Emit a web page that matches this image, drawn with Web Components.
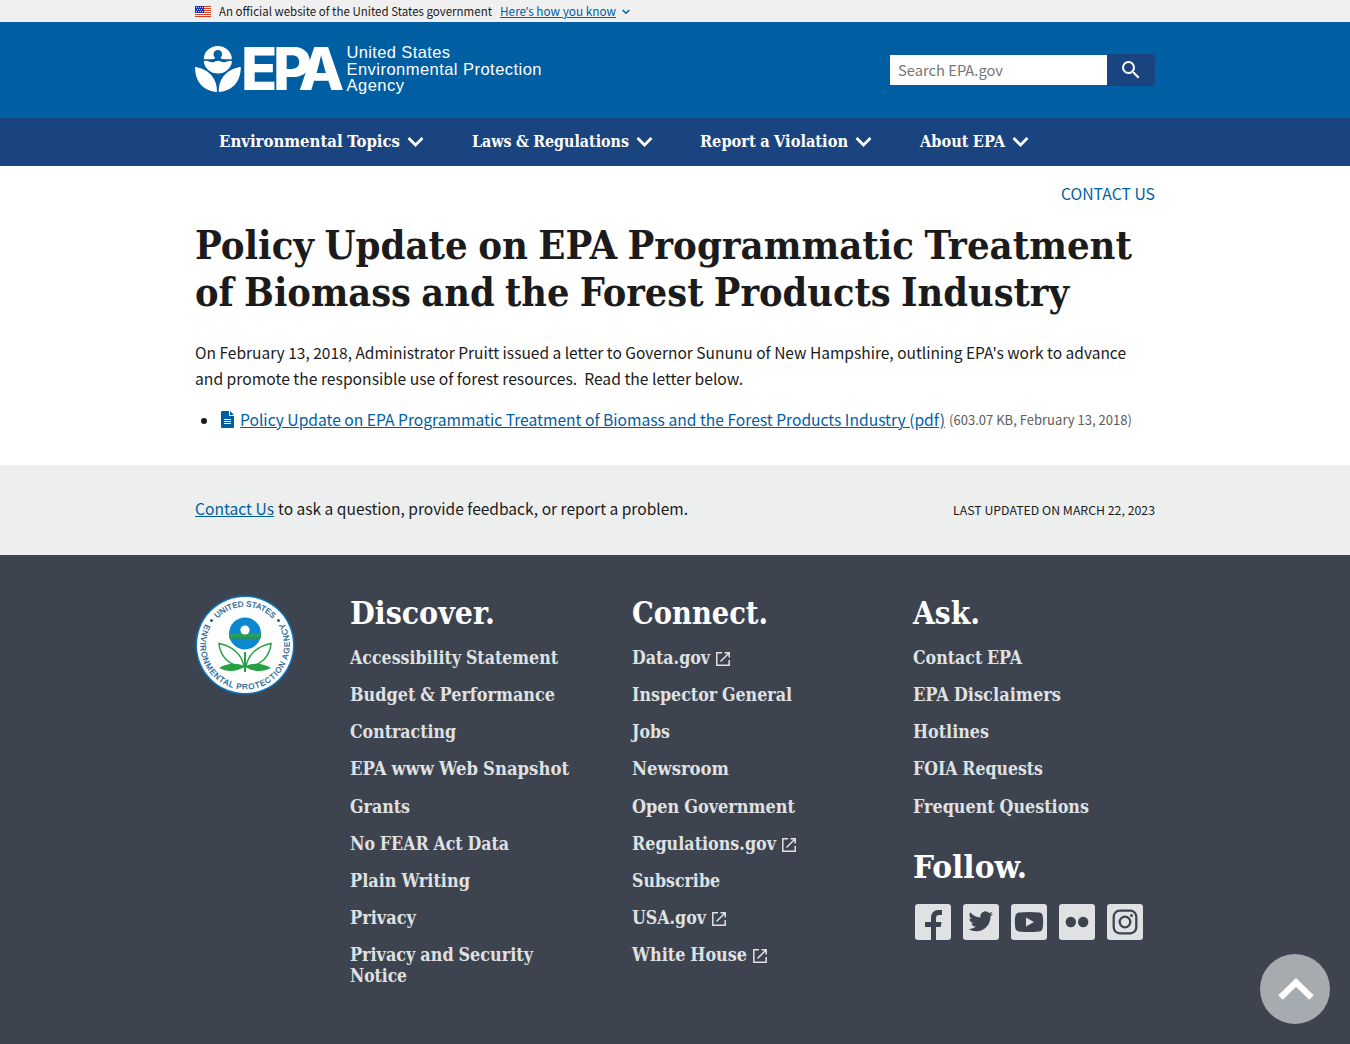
<!DOCTYPE html>
<html lang="en">
<head>
<meta charset="utf-8">
<title>Policy Update on EPA Programmatic Treatment of Biomass and the Forest Products Industry</title>
<style>
html,body{margin:0;padding:0}
body{font-family:"Noto Sans CJK SC","Open Sans",sans-serif;font-size:15.5px;color:#1b1b1b;background:#fff;height:1044px;overflow:hidden;
--serif:"DejaVu Serif Condensed","DejaVu Serif",serif;--link:#005ea2;--ink:#3e444f}
</style>
</head>
<body>
<epa-page></epa-page>
<script>
const make=(name,html)=>customElements.define(name,class extends HTMLElement{
  constructor(){super();this.attachShadow({mode:'open'}).innerHTML=html;}
});

make('gov-banner',`<style>
:host{display:block;background:#f0f0f0;height:22px;font-size:12px;line-height:22px}
.in{width:960px;margin:0 auto;display:flex;align-items:center;height:22px}
.flag{width:16px;height:11px;margin-right:8px}
a{color:var(--link);text-decoration:underline;margin-left:8px;display:flex}
.q{font-family:"Open Sans",sans-serif;line-height:1}
.ch{margin-left:6px;margin-top:2px}
</style><div class="in">
<svg class="flag" viewBox="0 0 16 11"><path fill="#fff" d="M0 0h16v11H0z"/><path stroke="#db3e1f" d="M0 .5h16M0 2.5h16M0 4.5h16M0 6.5h16M0 8.5h16M0 10.5h16"/><path fill="#1e33b1" d="M0 0h9v7H0z"/><path stroke="#fff" stroke-width=".8" stroke-dasharray="1 1" d="M1 1.5h7M2 3.5h6M1 5.5h7"/></svg>
<fit-text w="273">An official website of the United States government</fit-text>
<a><fit-text w="116">Here<span class="q">’</span>s how you know</fit-text></a>
<svg class="ch" width="8" height="6" viewBox="0 0 8 6"><path d="M.7 1 4 4.3 7.3 1" fill="none" stroke="#005ea2" stroke-width="1.5"/></svg>
</div>`);

make('epa-logo',`<style>
:host{display:block;height:80px;width:360px}
svg{display:block}
</style><svg width="360" height="80" viewBox="0 -16 360 80" fill="#fff">
<path d="M8.800 14.300A14 13.400 0 0 1 36.800 14.300L29 14.300Q25.400 14.200 25.600 12.600A4.300 4.300 0 1 0 20 12.600Q20.200 14.200 16.600 14.300Z"/>
<path d="M8.700 16.300Q11 15 14 16.600Q17 18 20 16.400Q23 15 26 16.400Q29 18 32 16.600Q35 15 37 16.300A14.200 13.300 0 0 1 8.700 16.300Z"/>
<path d="M0 22C12 23.500 22.400 32 22 47C8.500 46 0 37 0 22ZM45.800 22C33.800 23.500 23.400 32 23.800 47C37.300 46 45.800 37 45.800 22Z"/>
<text font-family="Inter,'Liberation Sans',sans-serif" font-weight="800" font-size="59.500" x="46 78 103.500" y="45">EPA</text>
<g font-family="'Liberation Sans',sans-serif" font-size="16.500"><text x="151.500" y="13" textLength="103.500">United States</text><text x="151.500" y="29.700" textLength="195">Environmental Protection</text><text x="151.500" y="46.200" textLength="57.500">Agency</text></g>
</svg>`);

make('site-search',`<style>
:host{display:flex;width:265px;height:32px;align-items:center}
.f{width:217px;height:30px;background:#fff;color:#757575;font-size:14.3px;line-height:29px;box-sizing:border-box;padding-left:8px}
.b{width:48px;height:32px;background:#1a4480;border-radius:0 4px 4px 0;display:flex;align-items:center;justify-content:center}
</style><div class="f"><fit-text w="105">Search EPA.gov</fit-text></div>
<div class="b"><svg width="24" height="24" viewBox="0 0 24 24" fill="#fff"><path d="M15.500 14h-.79l-.28-.27A6.470 6.470 0 0 0 16 9.500 6.500 6.500 0 1 0 9.500 16c1.610 0 3.090-.59 4.230-1.570l.27.28v.79l5 4.990L20.490 19l-4.990-5zm-6 0C7.010 14 5 11.990 5 9.500S7.010 5 9.500 5 14 7.010 14 9.500 11.990 14 9.500 14z"/></svg></div>`);

make('site-header',`<style>
:host{display:block;background:#005ea2;height:96px}
.in{width:960px;height:96px;margin:0 auto;display:flex;justify-content:space-between;align-items:flex-start}
epa-logo{margin-top:7px}site-search{margin-top:32px}
</style><div class="in"><epa-logo></epa-logo><site-search></site-search></div>`);

make('nav-item',`<style>
:host{display:flex;align-items:center;font:bold 16.500px/48px var(--serif);word-spacing:-.04em;color:#fff;height:48px}
svg{margin-left:7px}
</style><slot></slot><svg width="17" height="12" viewBox="0 0 17 12"><path d="M1.500 2 8.500 9 15.500 2" fill="none" stroke="#fff" stroke-width="2.800"/></svg>`);

make('site-nav',`<style>
:host{display:block;background:#1a4480;height:48px}
.in{width:912px;margin:0 auto;display:flex;gap:47.500px}
</style><div class="in">
<nav-item><fit-text w="181">Environmental Topics</fit-text></nav-item>
<nav-item><fit-text w="157">Laws &amp; Regulations</fit-text></nav-item>
<nav-item><fit-text w="148">Report a Violation</fit-text></nav-item>
<nav-item><fit-text w="85">About EPA</fit-text></nav-item></div>`);

make('policy-article',`<style>
:host{display:block;width:960px;margin:0 auto;height:299px}
.c{display:flex;justify-content:flex-end;padding-top:14px;line-height:26px;color:var(--link)}
h1{margin:15px 0 0;font:bold 40px/47px var(--serif);word-spacing:-.05em}
h1 fit-text,p fit-text{display:block}
p{margin:24px 0 0;line-height:26px}
ul{list-style:none;margin:14px 0 0;padding:0 0 0 6px;display:flex;align-items:center;line-height:26px}
.dot{width:6px;height:6px;border-radius:50%;background:#1b1b1b;margin:3px 14px 0 0}
a{color:var(--link);text-decoration:underline;margin-left:6px;display:flex}
.m{font-size:13.300px;color:#5c5c5c;margin-left:4px;display:flex;padding-top:2px}
</style>
<div class="c"><fit-text w="94">CONTACT US</fit-text></div>
<h1><fit-text w="937">Policy Update on EPA Programmatic Treatment</fit-text><fit-text w="874">of Biomass and the Forest Products Industry</fit-text></h1>
<p><fit-text w="931">On February 13, 2018, Administrator Pruitt issued a letter to Governor Sununu of New Hampshire, outlining EPA's work to advance</fit-text><fit-text w="548">and promote the responsible use of forest resources.&nbsp; Read the letter below.</fit-text></p>
<ul><span class="dot"></span><svg width="13" height="17" viewBox="0 0 13 17"><path fill="#005ea2" d="M1 0h7v5h5v11a1 1 0 0 1-1 1H1a1 1 0 0 1-1-1V1a1 1 0 0 1 1-1zM9 0l4 4H9z"/><path stroke="#fff" stroke-width="1" d="M3 8.500h7M3 10.500h7M3 12.500h7"/></svg>
<a><fit-text w="705">Policy Update on EPA Programmatic Treatment of Biomass and the Forest Products Industry (pdf)</fit-text></a><span class="m"><fit-text w="183">(603.07 KB, February 13, 2018)</fit-text></span></ul>`);

make('contact-band',`<style>
:host{display:block;background:#edefef;height:90px}
.in{width:960px;height:86px;margin:0 auto;display:flex;align-items:center}
a{color:var(--link);text-decoration:underline;display:flex;margin-right:4px}
.d{margin-left:auto;font-size:12px;padding-top:2px}
</style><div class="in"><a><fit-text w="79">Contact Us</fit-text></a><fit-text w="410">to ask a question, provide feedback, or report a problem.</fit-text>
<span class="d"><fit-text w="202">LAST UPDATED ON MARCH 22, 2023</fit-text></span></div>`);

make('epa-seal',`<style>:host{display:block;width:100px;height:100px}svg{display:block}</style>
<svg width="100" height="100" viewBox="-50 -50 100 100"><defs><path id="t" d="M-38.300 0A38.300 38.300 0 0 1 38.300 0"/><path id="b" d="M-39.500 -20.800A44.600 44.600 0 1 0 39.500 -20.800"/><clipPath id="c"><circle cy="-11.500" r="16"/></clipPath></defs>
<circle r="49.500" fill="#0876bb"/><circle r="48" fill="#fff"/>
<g font-family="'Liberation Sans',sans-serif" font-size="8" fill="#205f91" stroke="#205f91" stroke-width=".25"><text text-anchor="middle" textLength="62"><textPath href="#t" startOffset="50%">UNITED STATES</textPath></text><text textLength="184"><textPath href="#b">ENVIRONMENTAL PROTECTION AGENCY</textPath></text></g>
<circle cx="-33.500" cy="-24.500" r="1.500" fill="#205f91"/><circle cx="33.500" cy="-24.500" r="1.500" fill="#205f91"/>
<g clip-path="url(#c)"><path fill="#0d87cf" d="M-17-29h34v35h-34z"/><path fill="#2aa05b" d="M-17-11.500h11l3-2h6l3 2h11v5.500h-34z"/><path stroke="#0d6ca0" stroke-width="1" stroke-dasharray="2 1" d="M-16-7h32"/></g>
<circle cy="-15" r="4.600" fill="#fff"/>
<g stroke="#26a043" fill="#fff" stroke-width="1.500"><path d="M-1 22C-3 9-13 1-26-1.500C-25 12-15 21-1 22ZM1 22C3 9 13 1 26-1.500C25 12 15 21 1 22Z"/></g>
<path fill="#26a043" d="M-1 21C-9 17-20 19-26 23C-17 28-6 26-1 22ZM1 21C9 17 20 19 26 23C17 28 6 26 1 22Z"/><path stroke="#26a043" stroke-width="2" d="M0 7v20"/></svg>`);

make('external-icon',`<style>:host{display:flex;margin-left:6px;padding-top:5px}</style><svg width="14" height="14" viewBox="0 0 14 14" fill="none" stroke="#dfe1e2" stroke-width="1.500"><path d="M6 .8H.8v12.400h12.400V8M8.500.8h4.700v4.700M13 1 4.500 9.500"/></svg>`);

customElements.define('link-list',class extends HTMLElement{
  constructor(){super();this.attachShadow({mode:'open'});}
  connectedCallback(){
    const rows=this.getAttribute('items').split('/').map(r=>{
      const [t,w,ext]=r.split('|');
      return `<div><fit-text w="${w}">${t}</fit-text>${ext?'<external-icon></external-icon>':''}</div>`;
    }).join('');
    this.shadowRoot.innerHTML=`<style>:host{display:flex;flex-direction:column;gap:16.150px;font:bold 17.600px/21px var(--serif);word-spacing:-.04em;color:#dfe1e2;margin-top:14px}div{display:flex;height:21px}</style>${rows}`;
  }
});

make('footer-heading',`<style>:host{display:block;font:bold 32px/40px var(--serif);color:#fff;height:40px}</style><slot></slot>`);

make('social-links',`<style>:host{display:flex;gap:12px;padding:17px 0 0 2px}svg{display:block}</style>
<svg width="36" height="36"><rect width="36" height="36" rx="3" fill="#dfe1e2"/><path fill="#3e444f" d="M16 36V23h-6v-5h6v-4c0-5 3-8 7.500-8H27v5h-3c-2 0-3 1-3 3v4h5.500l-.8 5H21v13z"/></svg>
<svg width="36" height="36"><rect width="36" height="36" rx="3" fill="#dfe1e2"/><path fill="#3e444f" transform="translate(5.500 5) scale(1.020)" d="M23.950 4.570a10 10 0 0 1-2.820.77 4.960 4.960 0 0 0 2.160-2.720c-.95.550-2 .95-3.120 1.180a4.920 4.920 0 0 0-8.380 4.480C7.690 8.090 4.070 6.130 1.640 3.160a4.900 4.900 0 0 0 1.520 6.570 4.900 4.900 0 0 1-2.230-.62v.06a4.920 4.920 0 0 0 3.950 4.830 5 5 0 0 1-2.210.080 4.940 4.940 0 0 0 4.600 3.420A9.870 9.870 0 0 1 0 19.540a14 14 0 0 0 7.550 2.210c9.050 0 14-7.500 14-13.980 0-.21 0-.42-.02-.63a9.900 9.900 0 0 0 2.460-2.550z"/></svg>
<svg width="36" height="36"><rect width="36" height="36" rx="3" fill="#dfe1e2"/><path fill="#3e444f" d="M8 8.500Q18 7.300 28 8.500Q31.300 8.800 31.700 12Q32.600 18 31.700 24Q31.300 27.200 28 27.500Q18 28.700 8 27.500Q4.700 27.200 4.300 24Q3.400 18 4.300 12Q4.700 8.800 8 8.500Z"/><path fill="#dfe1e2" d="M15 13.500v9l8-4.500z"/></svg>
<svg width="36" height="36"><rect width="36" height="36" rx="3" fill="#dfe1e2"/><g fill="#3e444f"><circle cx="11.800" cy="18" r="5.200"/><circle cx="24.200" cy="18" r="5.200"/></g></svg>
<svg width="36" height="36"><rect width="36" height="36" rx="3" fill="#dfe1e2"/><g fill="none" stroke="#3e444f" stroke-width="2.300"><rect x="6.700" y="6.700" width="22.600" height="22.600" rx="6"/><circle cx="18" cy="18" r="5.300"/></g><circle cx="24.500" cy="11.500" r="1.500" fill="#3e444f"/></svg>`);

make('site-footer',`<style>
:host{display:block;background:var(--ink);height:489px}
.in{width:960px;margin:0 auto;display:flex;padding-top:38px}
epa-seal{margin:2px 55px 0 0}
.col{width:281.500px;flex:none}.last{width:242px}
.follow{margin-top:30px}
.wrapped{gap:0;margin-top:16px}
</style><div class="in"><epa-seal></epa-seal>
<div class="col"><footer-heading><fit-text w="145">Discover.</fit-text></footer-heading><link-list items="Accessibility Statement|208/Budget &amp;amp; Performance|205/Contracting|106/EPA www Web Snapshot|219/Grants|60/No FEAR Act Data|159/Plain Writing|120/Privacy|66"></link-list>
<link-list class="wrapped" items="Privacy and Security|183/Notice|57"></link-list></div>
<div class="col"><footer-heading><fit-text w="136">Connect.</fit-text></footer-heading><link-list items="Data.gov|78|1/Inspector General|160/Jobs|38/Newsroom|97/Open Government|163/Regulations.gov|144|1/Subscribe|88/USA.gov|74|1/White House|115|1"></link-list></div>
<div class="col last"><footer-heading><fit-text w="67">Ask.</fit-text></footer-heading><link-list items="Contact EPA|109/EPA Disclaimers|148/Hotlines|76/FOIA Requests|130/Frequent Questions|176"></link-list>
<footer-heading class="follow"><fit-text w="114">Follow.</fit-text></footer-heading><social-links></social-links></div></div>`);

make('back-to-top',`<style>:host{position:fixed;right:20px;bottom:20px;width:70px;height:70px;border-radius:50%;background:#a6abb0;display:block}</style>
<svg width="70" height="70"><path d="M20.500 43.500 36 28.500 51.500 43.500" fill="none" stroke="#fff" stroke-width="6.500"/></svg>`);

make('epa-page',`<style>:host{display:block}</style><gov-banner></gov-banner><site-header></site-header><site-nav></site-nav><policy-article></policy-article><contact-band></contact-band><site-footer></site-footer><back-to-top></back-to-top>`);

/* Single-line label condensed or expanded to an exact advance width. */
customElements.define('fit-text',class extends HTMLElement{
  constructor(){super();this.attachShadow({mode:'open'}).innerHTML='<style>:host{display:inline-block;vertical-align:top;white-space:nowrap}span{display:inline-block;transform-origin:0 50%;text-decoration:inherit}</style><span><slot></slot></span>';}
  connectedCallback(){
    const w=+this.getAttribute('w'),s=this.shadowRoot.querySelector('span');
    this.style.width=w+'px';
    if(this.closest('a'))s.style.textDecoration='underline';
    s.style.transform='scaleX('+w/s.getBoundingClientRect().width+')';
  }
});
</script>
</body>
</html>
